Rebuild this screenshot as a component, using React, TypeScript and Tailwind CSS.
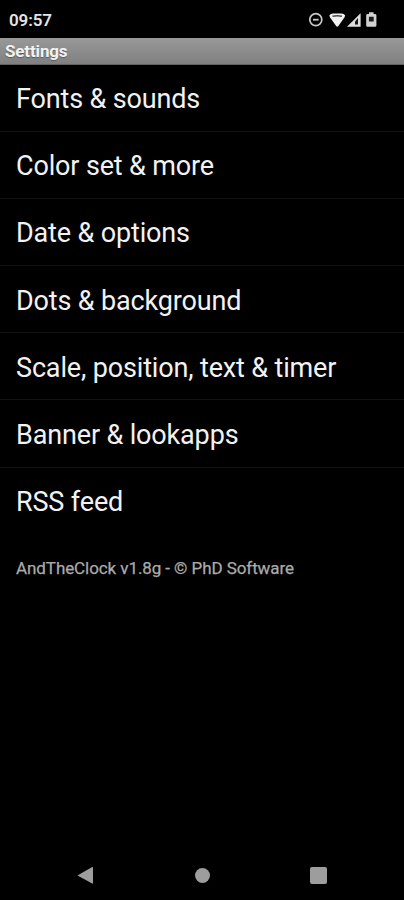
import React from 'react';

const MENU_ITEMS = [
    'Fonts & sounds',
    'Color set & more',
    'Date & options',
    'Dots & background',
    'Scale, position, text & timer',
    'Banner & lookapps',
    'RSS feed'
];

const StatusBar: React.FC = () => (
    <div className="flex h-[38px] items-center justify-between pl-[9px] pr-[26px] pt-[2px]">
        <span className="text-[17px] font-semibold leading-none tracking-[-0.1px] text-[#e4e4e4]">09:57</span>
        <svg width="72" height="18" viewBox="0 0 72 18" fill="none">
            {/* Do not disturb */}
            <circle cx="9.8" cy="8.7" r="6" stroke="#c8c8c8" strokeWidth="1.7" />
            <path d="M7 8.7h5.6" stroke="#c8c8c8" strokeWidth="1.8" />
            {/* Wifi */}
            <path d="M23.3 4.4Q24.5 2.6 27 2.4H35.5Q38 2.6 39.2 4.4L38.4 6.4L32 15.5H30.5L24.1 6.4Z" fill="#f2f2f2" />
            <path d="M26.5 5.3Q31.2 4.2 36 5.3" stroke="#4a4a4a" strokeWidth="1.5" />
            {/* Signal */}
            <path d="M41 15.7L54.6 2.2V15.7Z" fill="#dedede" />
            <path d="M49 13.6V10.4L52 7V13.6Z" fill="#151515" />
            {/* Battery */}
            <path d="M63 1.2h4.6V3H69q1.4 0 1.4 1.4V14.4q0 1.4-1.4 1.4h-7.4q-1.4 0-1.4-1.4V4.4Q60.2 3 61.6 3H63Z" fill="#d2d2d2" />
            <path d="M62.9 5.8h4.8V10.4h-4.8Z" fill="#1c1c1c" />
        </svg>
    </div>
);

const NavBar: React.FC = () => (
    <div className="flex h-[50px] items-center justify-between px-[77px]">
        <svg width="17" height="18" viewBox="0 0 17 18" fill="#9d9d9d">
            <path d="M.5 9.5L15.2 1Q16 .8 16 1.6V17Q16 18 15.2 17.6Z" />
        </svg>
        <div className="h-[15px] w-[15px] rounded-full bg-[#9d9d9d]" />
        <div className="h-[17px] w-[17px] rounded-[2px] bg-[#9d9d9d]" />
    </div>
);

export default function App() {
    return (
        <div className="flex h-[900px] w-[404px] flex-col overflow-hidden bg-black font-['Roboto',sans-serif]">
            <StatusBar />

            <div className="flex h-[27px] items-center border-b border-[#626262] bg-linear-to-b from-[#999999] to-[#808080] pl-[5px] pt-px">
                <h1 className="text-[17px] font-bold leading-none tracking-[-0.15px] text-[#f2f2f2] [text-shadow:0_1px_1px_#5a5a5a]">Settings</h1>
            </div>

            <ul>
                {MENU_ITEMS.map((item) => (
                    <li
                        key={item}
                        className="flex h-[67.1px] items-center border-b border-[#121212] pl-4 pt-[3.5px] text-[27px] leading-none tracking-[-0.15px] text-[#f2f2f2] last:border-b-0"
                    >
                        <span>{item}</span>
                    </li>
                ))}
            </ul>
            <p className="flex h-[67px] items-center pl-4 pt-px text-[17px] leading-none tracking-[-0.08px] text-[#ababab] [-webkit-text-stroke:0.25px_#ababab]">
                AndTheClock v1.8g - © PhD Software
            </p>

            <div className="flex-1" />
            <NavBar />
        </div>
    );
}
